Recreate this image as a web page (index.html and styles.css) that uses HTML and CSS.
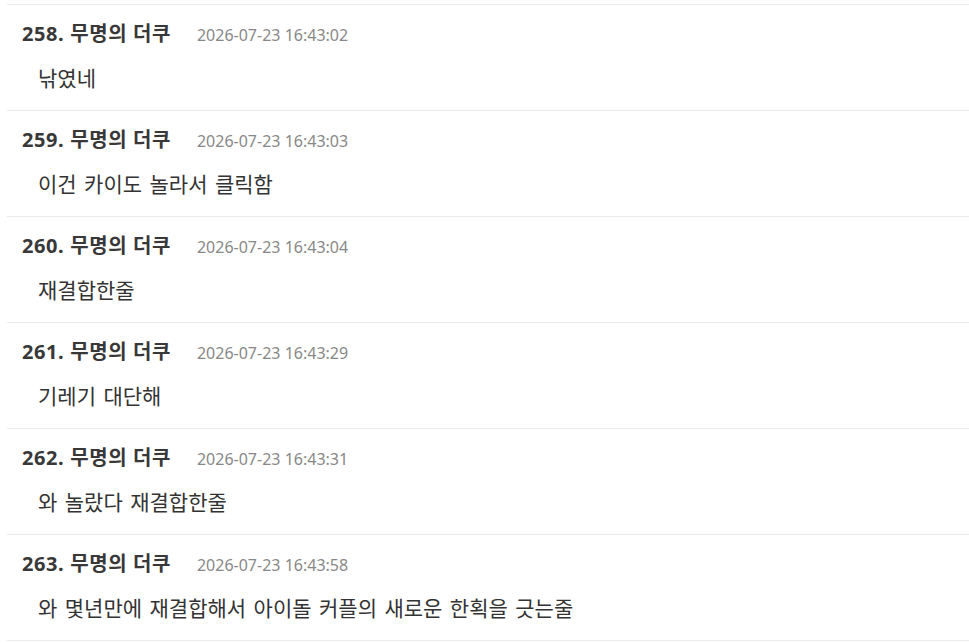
FILE: index.html
```html
<!DOCTYPE html>
<html lang="ko">
  <head>
    <meta charset="UTF-8" />
    <meta name="viewport" content="width=device-width, initial-scale=1.0" />
    <title>댓글</title>
    <link rel="stylesheet" href="styles.css">
  </head>
  <body>
    <ul class="comments">
      <li class="comment">
        <div class="meta">
          <span class="author">258. 무명의 더쿠</span>
          <span class="date">2026-07-23 16:43:02</span>
        </div>
        <p class="body">낚였네</p>
      </li>
      <li class="comment">
        <div class="meta">
          <span class="author">259. 무명의 더쿠</span>
          <span class="date">2026-07-23 16:43:03</span>
        </div>
        <p class="body">이건 카이도 놀라서 클릭함</p>
      </li>
      <li class="comment">
        <div class="meta">
          <span class="author">260. 무명의 더쿠</span>
          <span class="date">2026-07-23 16:43:04</span>
        </div>
        <p class="body">재결합한줄</p>
      </li>
      <li class="comment">
        <div class="meta">
          <span class="author">261. 무명의 더쿠</span>
          <span class="date">2026-07-23 16:43:29</span>
        </div>
        <p class="body">기레기 대단해</p>
      </li>
      <li class="comment">
        <div class="meta">
          <span class="author">262. 무명의 더쿠</span>
          <span class="date">2026-07-23 16:43:31</span>
        </div>
        <p class="body">와 놀랐다 재결합한줄</p>
      </li>
      <li class="comment">
        <div class="meta">
          <span class="author">263. 무명의 더쿠</span>
          <span class="date">2026-07-23 16:43:58</span>
        </div>
        <p class="body">와 몇년만에 재결합해서 아이돌 커플의 새로운 한획을 긋는줄</p>
      </li>
    </ul>
  </body>
</html>
```

FILE: styles.css
```css
body {
  margin: 0;
  background-color: #fff;
  font-family: "Noto Sans", "Noto Sans CJK KR", sans-serif;
  color: #333;
}

.comments {
  list-style: none;
  margin: 4px 0 0 7px;
  padding: 0;
  border-top: 1px solid #ebebeb;
}

.comment {
  height: 106px;
  box-sizing: border-box;
  padding: 18px 15px 0;
  border-bottom: 1px solid #ebebeb;
}

.meta {
  display: flex;
  align-items: baseline;
  gap: 26px;
  line-height: 22px;
}

.author {
  font-size: 20px;
  font-weight: 700;
  letter-spacing: 0.6px;
  color: #383838;
}

.date {
  font-size: 16px;
  color: #888;
}

.body {
  margin: 19px 0 0 16px;
  font-size: 21px;
  word-spacing: 2px;
  line-height: 26px;
  color: #333;
}
```
